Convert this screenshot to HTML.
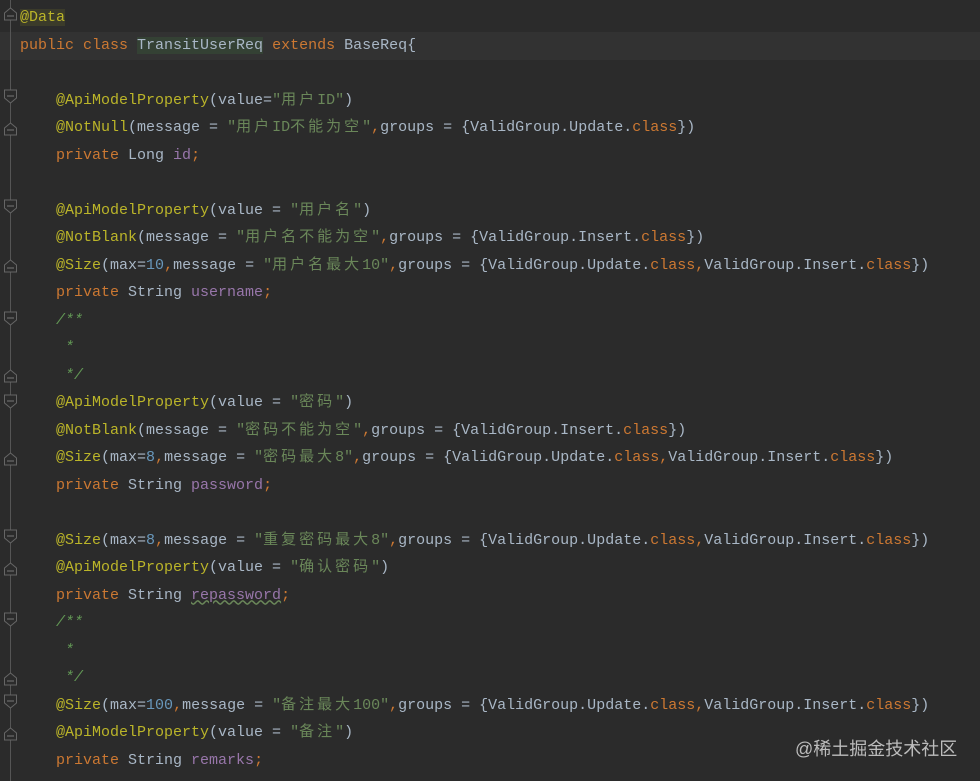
<!DOCTYPE html>
<html><head><meta charset="utf-8"><style>
html,body{margin:0;padding:0;width:980px;height:781px;overflow:hidden;background:#2b2b2b;}
.hl{position:absolute;left:0;top:32px;width:980px;height:28px;background:#323232;}
.gl{position:absolute;left:10px;top:0;width:1px;height:781px;background:#555;}
.code{position:absolute;left:20px;top:4px;font-family:"Liberation Mono","Noto Sans CJK SC",monospace;font-size:15px;line-height:27.5px;color:#a9b7c6;white-space:pre;}
.k{color:#cc7832}.a{color:#bbb529}.s{color:#6a8759}.f{color:#9876aa}.n{color:#6897bb}.cm{color:#629755;font-style:italic}
.c{letter-spacing:3px}
.dat{background:#3b3b2a}
.cls{background:#344134}
.u{text-decoration:underline wavy #6a8759;}
.m{position:absolute;left:4px;width:12px;height:14px;}
.wm{position:absolute;left:795px;top:735px;font-family:"Liberation Sans","Noto Sans CJK SC",sans-serif;font-size:18px;color:#bcbcbc;}
</style></head><body>
<div class="hl"></div>
<div class="gl"></div>
<svg width="20" height="781" style="position:absolute;left:0;top:0">
<g fill="#2b2b2b" stroke="#666" stroke-width="1">
<path d="M4.5 20V13L10.5 8L16.5 13V20Z"/>
<path d="M4.5 90V98L10.5 103L16.5 98V90Z"/><path d="M4.5 135V128L10.5 123L16.5 128V135Z"/>
<path d="M4.5 200V208L10.5 213L16.5 208V200Z"/><path d="M4.5 272V265L10.5 260L16.5 265V272Z"/>
<path d="M4.5 312V320L10.5 325L16.5 320V312Z"/><path d="M4.5 382V375L10.5 370L16.5 375V382Z"/>
<path d="M4.5 395V403L10.5 408L16.5 403V395Z"/><path d="M4.5 465V458L10.5 453L16.5 458V465Z"/>
<path d="M4.5 530V538L10.5 543L16.5 538V530Z"/><path d="M4.5 575V568L10.5 563L16.5 568V575Z"/>
<path d="M4.5 613V621L10.5 626L16.5 621V613Z"/><path d="M4.5 685V678L10.5 673L16.5 678V685Z"/>
<path d="M4.5 695V703L10.5 708L16.5 703V695Z"/><path d="M4.5 740V733L10.5 728L16.5 733V740Z"/>
</g>
<g stroke="#777"><path d="M7 16H14M7 96H14M7 130H14M7 206H14M7 268H14M7 318H14M7 378H14M7 401H14M7 461H14M7 536H14M7 571H14M7 619H14M7 681H14M7 701H14M7 736H14"/></g>
</svg>
<div class="code"><span class="a dat">@Data</span>
<span class="k">public class </span><span class="cls">TransitUserReq</span><span class="k"> extends </span>BaseReq{

    <span class="a">@ApiModelProperty</span>(value=<span class="s">"<span class="c">用户</span>ID"</span>)
    <span class="a">@NotNull</span>(message = <span class="s">"<span class="c">用户</span>ID<span class="c">不能为空</span>"</span><span class="k">,</span>groups = {ValidGroup.Update.<span class="k">class</span>})
    <span class="k">private </span>Long <span class="f">id</span><span class="k">;</span>

    <span class="a">@ApiModelProperty</span>(value = <span class="s">"<span class="c">用户名</span>"</span>)
    <span class="a">@NotBlank</span>(message = <span class="s">"<span class="c">用户名不能为空</span>"</span><span class="k">,</span>groups = {ValidGroup.Insert.<span class="k">class</span>})
    <span class="a">@Size</span>(max=<span class="n">10</span><span class="k">,</span>message = <span class="s">"<span class="c">用户名最大</span>10"</span><span class="k">,</span>groups = {ValidGroup.Update.<span class="k">class,</span>ValidGroup.Insert.<span class="k">class</span>})
    <span class="k">private </span>String <span class="f">username</span><span class="k">;</span>
    <span class="cm">/**</span>
<span class="cm">     *</span>
<span class="cm">     */</span>
    <span class="a">@ApiModelProperty</span>(value = <span class="s">"<span class="c">密码</span>"</span>)
    <span class="a">@NotBlank</span>(message = <span class="s">"<span class="c">密码不能为空</span>"</span><span class="k">,</span>groups = {ValidGroup.Insert.<span class="k">class</span>})
    <span class="a">@Size</span>(max=<span class="n">8</span><span class="k">,</span>message = <span class="s">"<span class="c">密码最大</span>8"</span><span class="k">,</span>groups = {ValidGroup.Update.<span class="k">class,</span>ValidGroup.Insert.<span class="k">class</span>})
    <span class="k">private </span>String <span class="f">password</span><span class="k">;</span>

    <span class="a">@Size</span>(max=<span class="n">8</span><span class="k">,</span>message = <span class="s">"<span class="c">重复密码最大</span>8"</span><span class="k">,</span>groups = {ValidGroup.Update.<span class="k">class,</span>ValidGroup.Insert.<span class="k">class</span>})
    <span class="a">@ApiModelProperty</span>(value = <span class="s">"<span class="c">确认密码</span>"</span>)
    <span class="k">private </span>String <span class="f u">repassword</span><span class="k">;</span>
    <span class="cm">/**</span>
<span class="cm">     *</span>
<span class="cm">     */</span>
    <span class="a">@Size</span>(max=<span class="n">100</span><span class="k">,</span>message = <span class="s">"<span class="c">备注最大</span>100"</span><span class="k">,</span>groups = {ValidGroup.Update.<span class="k">class,</span>ValidGroup.Insert.<span class="k">class</span>})
    <span class="a">@ApiModelProperty</span>(value = <span class="s">"<span class="c">备注</span>"</span>)
    <span class="k">private </span>String <span class="f">remarks</span><span class="k">;</span></div>
<div class="wm">@稀土掘金技术社区</div>
</body></html>
